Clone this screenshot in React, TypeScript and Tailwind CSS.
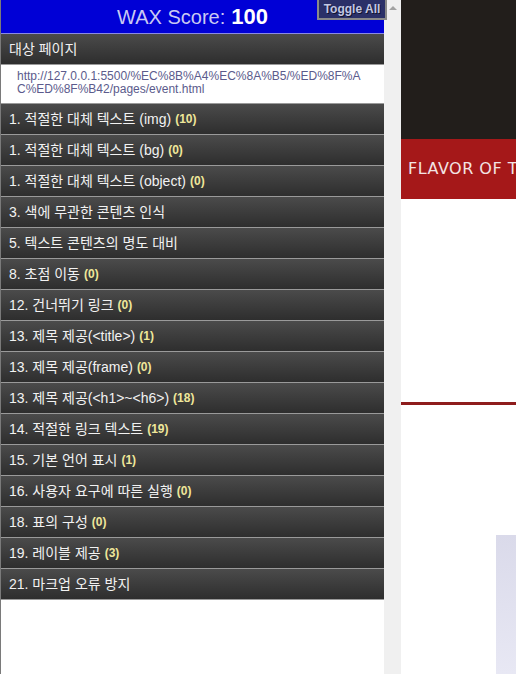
import React from "react";

const rows: { label: string; count?: string }[] = [
  { label: "1. 적절한 대체 텍스트 (img)", count: "(10)" },
  { label: "1. 적절한 대체 텍스트 (bg)", count: "(0)" },
  { label: "1. 적절한 대체 텍스트 (object)", count: "(0)" },
  { label: "3. 색에 무관한 콘텐츠 인식" },
  { label: "5. 텍스트 콘텐츠의 명도 대비" },
  { label: "8. 초점 이동", count: "(0)" },
  { label: "12. 건너뛰기 링크", count: "(0)" },
  { label: "13. 제목 제공(<title>)", count: "(1)" },
  { label: "13. 제목 제공(frame)", count: "(0)" },
  { label: "13. 제목 제공(<h1>~<h6>)", count: "(18)" },
  { label: "14. 적절한 링크 텍스트", count: "(19)" },
  { label: "15. 기본 언어 표시", count: "(1)" },
  { label: "16. 사용자 요구에 따른 실행", count: "(0)" },
  { label: "18. 표의 구성", count: "(0)" },
  { label: "19. 레이블 제공", count: "(3)" },
  { label: "21. 마크업 오류 방지" },
];

const font = { fontFamily: '"Liberation Sans", Arial, "Noto Sans CJK KR", sans-serif' };

function Row({ label, count }: { label: string; count?: string }) {
  return (
    <div className="h-[31px] border-t border-[#9a9a9a] bg-gradient-to-b from-[#4b4b4b] to-[#2e2e2e] flex items-center pl-[8px] text-[14px] text-[#f2f2f2] whitespace-nowrap">
      <span>{label}</span>
      {count && <span className="ml-[4px] text-[12px] font-bold text-[#efe79a]">{count}</span>}
    </div>
  );
}

export default function App() {
  return (
    <div className="relative flex w-[516px] h-[674px] overflow-hidden bg-white" style={font}>
      {/* WAX panel */}
      <div className="w-[384px] h-full flex flex-col border-l border-[#7a7a7a] bg-white">
        <div className="h-[34px] bg-[#0000d6] border-b border-[#8a8ae6] flex items-center justify-center">
          <span className="text-[20px] text-[#c9c9f2] mt-[1px]">WAX Score:</span>
          <span className="ml-[6px] text-[22px] font-bold text-white">100</span>
        </div>
        <div className="h-[30px] bg-gradient-to-b from-[#4b4b4b] to-[#2e2e2e] flex items-center pl-[8px] text-[14px] text-[#f2f2f2]">
          대상 페이지
        </div>
        <div className="h-[39px] bg-white border-t border-[#9a9a9a] pl-[16px] pr-[8px] pt-[5px] text-[12px] leading-[13px] text-[#5b5b8c] break-all">
          http://127.0.0.1:5500/%EC%8B%A4%EC%8A%B5/%ED%8F%AC%ED%8F%B42/pages/event.html
        </div>
        {rows.map((r, i) => (
          <Row key={i} label={r.label} count={r.count} />
        ))}
        <div className="border-t border-[#9a9a9a] flex-1 bg-white" />
      </div>

      {/* scrollbar */}
      <div className="w-[17px] h-full bg-[#f0f0f0] flex justify-center pt-[6px]">
        <div className="w-0 h-0 border-l-[4px] border-r-[4px] border-b-[4px] border-l-transparent border-r-transparent border-b-[#a3a3a3]" />
      </div>

      {/* page content */}
      <div className="flex-1 h-full flex flex-col overflow-hidden bg-white">
        <div className="h-[139px] bg-[#221e1b]" />
        <div className="h-[60px] bg-[#a51819] flex items-center pl-[7px] overflow-hidden">
          <span className="text-[16px] text-[#f3e4e4] whitespace-nowrap tracking-[0.5px]" style={{ fontFamily: '"DejaVu Sans", sans-serif' }}>
            FLAVOR OF T
          </span>
        </div>
        <div className="h-[203px]" />
        <div className="h-[3px] bg-[#8e1c1c]" />
        <div className="h-[130px]" />
        <div className="flex-1 flex">
          <div className="w-[95px]" />
          <div className="flex-1 bg-gradient-to-b from-[#dadaea] to-[#e8e8f4]" />
        </div>
      </div>

      {/* Toggle All button */}
      <div className="absolute left-[317px] top-0 w-[70px] h-[20px] bg-[#2b3068] border-2 border-[#8a8a8a] border-t-0 flex items-center justify-center text-[12px] font-bold text-[#c3c7e3] [text-shadow:1px_1px_0_#10142e]">
        Toggle All
      </div>
    </div>
  );
}
